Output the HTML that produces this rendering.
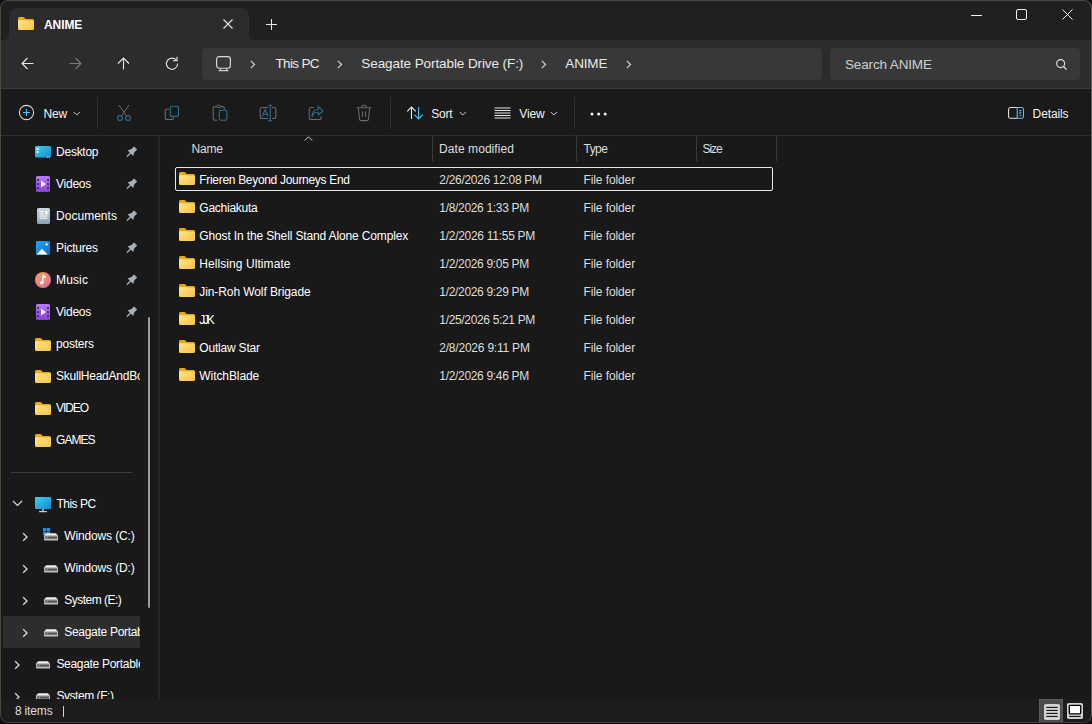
<!DOCTYPE html>
<html><head><meta charset="utf-8">
<style>
*{margin:0;padding:0;box-sizing:border-box}
html,body{width:1092px;height:724px;overflow:hidden;background:#0e0e0e;font-family:"Liberation Sans",sans-serif;color:#fff}
.win{position:absolute;left:0;top:0;width:1092px;height:723px;border-radius:8px;background:#191919;overflow:hidden}
.bord{position:absolute;left:0;top:0;width:1092px;height:723px;border-radius:8px;border:1px solid #3c3c3c;border-top-color:#474747;border-left-color:#4a4838;border-right-color:#5e5e5e}
.abs{position:absolute}
.t{position:absolute;white-space:nowrap}
svg{position:absolute;overflow:visible}
</style></head><body>
<svg width="0" height="0" style="position:absolute">
<defs>
<linearGradient id="fg" x1="0" y1="0" x2="1" y2="1"><stop offset="0" stop-color="#ffe58c"/><stop offset="1" stop-color="#f9c33f"/></linearGradient>
<linearGradient id="cy" x1="0" y1="0" x2="1" y2="1"><stop offset="0" stop-color="#3fd0ea"/><stop offset="1" stop-color="#1787d2"/></linearGradient>
<linearGradient id="pu" x1="0" y1="0" x2="0" y2="1"><stop offset="0" stop-color="#b77cf2"/><stop offset="1" stop-color="#8840d8"/></linearGradient>
<linearGradient id="dc" x1="0" y1="0" x2="0" y2="1"><stop offset="0" stop-color="#cfdbe6"/><stop offset="1" stop-color="#8aa0b6"/></linearGradient>
<linearGradient id="pc" x1="0" y1="0" x2="1" y2="1"><stop offset="0" stop-color="#29a6f5"/><stop offset="1" stop-color="#0c6bc4"/></linearGradient>
<linearGradient id="mu" x1="0" y1="0" x2="1" y2="1"><stop offset="0" stop-color="#f6a257"/><stop offset="1" stop-color="#d4699f"/></linearGradient>
</defs>
</svg>
<div class="win">
<div class="abs" style="left:0;top:0;width:1092px;height:40px;background:#202020"></div>
<div class="abs" style="left:9px;top:8px;width:240px;height:32px;background:#2c2c2c;border-radius:8px 8px 0 0"></div>
<svg style="left:4px;top:35px" width="5" height="5"><path d="M0 5H5V0A5 5 0 0 1 0 5Z" fill="#2c2c2c"/></svg>
<svg style="left:249px;top:35px" width="5" height="5"><path d="M5 5H0V0A5 5 0 0 0 5 5Z" fill="#2c2c2c"/></svg>
<svg style="left:18px;top:17px" width="16" height="13"><svg viewBox="0 0 16 13" width="100%" height="100%" style="position:absolute;left:0;top:0">
<path d="M1.5 0H5.6L7.6 2H14.5A1.5 1.5 0 0 1 16 3.5V6H0V1.5A1.5 1.5 0 0 1 1.5 0Z" fill="#efa80a"/>
<path d="M0 4.5A1.5 1.5 0 0 1 1.5 3H6.6L8 3.6H14.5A1.5 1.5 0 0 1 16 5.1V11.5A1.5 1.5 0 0 1 14.5 13H1.5A1.5 1.5 0 0 1 0 11.5Z" fill="url(#fg)"/>
</svg></svg>
<div class="t" style="left:44.00px;top:17.00px;font-size:12px;line-height:16px;color:#ffffff;letter-spacing:-0.088px;font-weight:bold">ANIME</div>
<svg style="left:222.5px;top:19px" width="10" height="10"><path d="M0.5 0.5L9.5 9.5M9.5 0.5L0.5 9.5" stroke="#e6e6e6" stroke-width="1.1"/></svg>
<svg style="left:266px;top:19px" width="11" height="11"><path d="M5.5 0V11M0 5.5H11" stroke="#e6e6e6" stroke-width="1"/></svg>
<svg style="left:971px;top:14px" width="11" height="2"><path d="M0 1.5H11" stroke="#f0f0f0" stroke-width="1"/></svg>
<svg style="left:1016px;top:9px" width="11" height="11"><rect x="0.5" y="0.5" width="10" height="10" rx="1.5" fill="none" stroke="#f0f0f0" stroke-width="1"/></svg>
<svg style="left:1062px;top:9px" width="11" height="11"><path d="M0.5 0.5L10.5 10.5M10.5 0.5L0.5 10.5" stroke="#f0f0f0" stroke-width="1"/></svg>
<div class="abs" style="left:0;top:40px;width:1092px;height:48px;background:#2c2c2c"></div>
<div class="abs" style="left:0;top:88px;width:1092px;height:1px;background:#393939"></div>
<svg style="left:21px;top:57px" width="13" height="13"><path d="M12.5 6.5H1M6.5 1L1 6.5L6.5 12" fill="none" stroke="#e8e8e8" stroke-width="1.1"/></svg>
<svg style="left:69px;top:57px" width="13" height="13"><path d="M0.5 6.5H12M6.5 1L12 6.5L6.5 12" fill="none" stroke="#7a7a7a" stroke-width="1.1"/></svg>
<svg style="left:117px;top:57px" width="13" height="13"><path d="M6.5 12.5V1M1 6.5L6.5 1L12 6.5" fill="none" stroke="#e8e8e8" stroke-width="1.1"/></svg>
<svg style="left:165px;top:56.2px" width="14" height="14"><path d="M11.6 4.5A5.6 5.6 0 1 0 12.6 7.5" fill="none" stroke="#e8e8e8" stroke-width="1.1"/><path d="M12 0.8V4.8H8" fill="none" stroke="#e8e8e8" stroke-width="1.1"/></svg>
<div class="abs" style="left:202px;top:48px;width:620px;height:32px;background:#383838;border-radius:4px"></div>
<svg style="left:215.5px;top:56px" width="15" height="16"><rect x="0.6" y="0.6" width="13.8" height="11.6" rx="2.6" fill="none" stroke="#d8d8d8" stroke-width="1.15"/><path d="M4.3 12.6V14.2M10.7 12.6V14.2" stroke="#cfcfcf" stroke-width="1.1"/><path d="M2.6 14.6H12.4" stroke="#cfcfcf" stroke-width="1.2"/></svg>
<svg style="left:250px;top:60px" width="6" height="9"><path d="M0.8 0.8L4.6 4.5L0.8 8.2" fill="none" stroke="#d8d8d8" stroke-width="1.1"/></svg>
<svg style="left:337px;top:60px" width="6" height="9"><path d="M0.8 0.8L4.6 4.5L0.8 8.2" fill="none" stroke="#d8d8d8" stroke-width="1.1"/></svg>
<svg style="left:541px;top:60px" width="6" height="9"><path d="M0.8 0.8L4.6 4.5L0.8 8.2" fill="none" stroke="#d8d8d8" stroke-width="1.1"/></svg>
<svg style="left:626px;top:60px" width="6" height="9"><path d="M0.8 0.8L4.6 4.5L0.8 8.2" fill="none" stroke="#d8d8d8" stroke-width="1.1"/></svg>
<div class="abs" style="left:830px;top:48px;width:250px;height:32px;background:#383838;border-radius:4px"></div>
<svg style="left:1055.5px;top:59px" width="12" height="11"><circle cx="4.6" cy="4.6" r="4" fill="none" stroke="#e0e0e0" stroke-width="1.15"/><path d="M7.5 7.5L10.6 10.6" stroke="#e0e0e0" stroke-width="1.3"/></svg>
<div class="t" style="left:275.50px;top:55.20px;font-size:13.5px;line-height:18px;color:#e8e8e8;letter-spacing:-0.667px">This PC</div>
<div class="t" style="left:361.30px;top:55.20px;font-size:13.5px;line-height:18px;color:#e8e8e8;letter-spacing:-0.088px">Seagate Portable Drive (F:)</div>
<div class="t" style="left:565.30px;top:55.20px;font-size:13.5px;line-height:18px;color:#e8e8e8;letter-spacing:-0.162px">ANIME</div>
<div class="t" style="left:845.00px;top:55.50px;font-size:13.5px;line-height:18px;color:#cfcfcf;letter-spacing:-0.141px">Search ANIME</div>
<div class="abs" style="left:0;top:89px;width:1092px;height:46px;background:#1a1a1a"></div>
<div class="abs" style="left:0;top:135px;width:1092px;height:1px;background:#2e2e2e"></div>
<svg style="left:18px;top:104px" width="17" height="17"><circle cx="8.5" cy="8.5" r="7.1" fill="none" stroke="#d6d6d6" stroke-width="1.1"/><path d="M8.5 5V12M5 8.5H12" stroke="#4cc2ff" stroke-width="1.1"/></svg>
<svg style="left:73px;top:111px" width="8" height="6"><path d="M0.8 1L3.8 4L6.8 1" fill="none" stroke="#cfcfcf" stroke-width="1"/></svg>
<div class="abs" style="left:97px;top:97px;width:1px;height:32px;background:#2e2e2e"></div>
<svg style="left:115px;top:104px" width="18" height="18"><path d="M4 1L11 11.5M13.8 1L6.8 11.5" stroke="#6a6a6a" stroke-width="1"/><circle cx="5" cy="14" r="2.4" fill="none" stroke="#2f6d92" stroke-width="1.1"/><circle cx="13" cy="14" r="2.4" fill="none" stroke="#2f6d92" stroke-width="1.1"/></svg>
<svg style="left:164px;top:105px" width="16" height="16"><path d="M5 4H3.2A2 2 0 0 0 1.2 6V12.5A2 2 0 0 0 3.2 14.5H7.5A2 2 0 0 0 9.5 12.5" fill="none" stroke="#6a6a6a" stroke-width="1.1"/><rect x="6.3" y="1.2" width="8.2" height="10.2" rx="2" fill="none" stroke="#2f6d92" stroke-width="1.1"/></svg>
<svg style="left:212px;top:104px" width="17" height="18"><path d="M5.2 16.2H2.8A1.6 1.6 0 0 1 1.2 14.6V4.2A1.6 1.6 0 0 1 2.8 2.6H10.8A1.6 1.6 0 0 1 12.4 4.2V5.4" fill="none" stroke="#6a6a6a" stroke-width="1.1"/><rect x="4.8" y="1.2" width="4" height="2.4" rx="1.2" fill="#1a1a1a" stroke="#6a6a6a" stroke-width="1"/><rect x="7.3" y="6.3" width="7.6" height="9.9" rx="1.6" fill="none" stroke="#2f6d92" stroke-width="1.1"/></svg>
<svg style="left:259px;top:104px" width="18" height="18"><path d="M9 3.5H3.2A2 2 0 0 0 1.2 5.5V12.5A2 2 0 0 0 3.2 14.5H9M13 3.5H14.8A2 2 0 0 1 16.8 5.5V12.5A2 2 0 0 1 14.8 14.5H13" fill="none" stroke="#6a6a6a" stroke-width="1.1"/><path d="M3.4 12.2L6.2 5.4L9 12.2M4.4 10.2H8" fill="none" stroke="#2f6d92" stroke-width="1.1"/><path d="M11.2 1.2V16.8M9.2 1.2H13.2M9.2 16.8H13.2" fill="none" stroke="#2f6d92" stroke-width="1.1"/></svg>
<svg style="left:308px;top:104px" width="17" height="18"><path d="M6 3.5H3.2A2 2 0 0 0 1.2 5.5V13.5A2 2 0 0 0 3.2 15.5H11.2A2 2 0 0 0 13.2 13.5V12.5" fill="none" stroke="#6a6a6a" stroke-width="1.1"/><path d="M4 13C4.5 9.5 7.5 8 10.2 8.2V11L15 6.8L10.2 2.4V5.2C6.6 5.4 4 8.4 4 13Z" fill="none" stroke="#2f6d92" stroke-width="1.1" stroke-linejoin="round"/></svg>
<svg style="left:356px;top:104px" width="16" height="18"><path d="M0.8 3.8H15.2M5.8 3.8V2.6A1.4 1.4 0 0 1 7.2 1.2H8.8A1.4 1.4 0 0 1 10.2 2.6V3.8M2.2 3.8L3.6 15.2A1.6 1.6 0 0 0 5.2 16.6H10.8A1.6 1.6 0 0 0 12.4 15.2L13.8 3.8M6.5 7.2V12.8M9.5 7.2V12.8" fill="none" stroke="#6a6a6a" stroke-width="1.1"/></svg>
<div class="abs" style="left:390px;top:97px;width:1px;height:32px;background:#2e2e2e"></div>
<svg style="left:406px;top:106px" width="18" height="14"><path d="M5.5 13V1M1.2 5.4L5.5 1L9.8 5.4" fill="none" stroke="#e8e8e8" stroke-width="1.1"/><path d="M12.6 1V13M8.3 8.6L12.6 13L16.9 8.6" fill="none" stroke="#4cc2ff" stroke-width="1.1"/></svg>
<svg style="left:459px;top:111px" width="8" height="6"><path d="M0.8 1L3.8 4L6.8 1" fill="none" stroke="#cfcfcf" stroke-width="1"/></svg>
<svg style="left:494px;top:107px" width="17" height="12"><path d="M0.5 1H16.5M0.5 3.5H16.5M0.5 6H16.5M0.5 8.5H16.5M0.5 11H16.5" stroke="#e8e8e8" stroke-width="1"/></svg>
<svg style="left:550px;top:111px" width="8" height="6"><path d="M0.8 1L3.8 4L6.8 1" fill="none" stroke="#cfcfcf" stroke-width="1"/></svg>
<div class="abs" style="left:574px;top:97px;width:1px;height:32px;background:#2e2e2e"></div>
<svg style="left:590px;top:112px" width="18" height="4"><circle cx="2" cy="2" r="1.5" fill="#f0f0f0"/><circle cx="8.6" cy="2" r="1.5" fill="#f0f0f0"/><circle cx="15.2" cy="2" r="1.5" fill="#f0f0f0"/></svg>
<svg style="left:1008px;top:107px" width="17" height="12"><path d="M9.2 0.55H2.4A1.9 1.9 0 0 0 0.55 2.4V9.4A1.9 1.9 0 0 0 2.4 11.25H9.2" fill="none" stroke="#e0e0e0" stroke-width="1.1"/><path d="M9.2 0.55H13.6A1.9 1.9 0 0 1 15.5 2.4V9.4A1.9 1.9 0 0 1 13.6 11.25H9.2Z" fill="none" stroke="#4cc2ff" stroke-width="1.1"/><path d="M11.2 3.6H13.4M11.2 5.9H13.4M11.2 8.2H13.4" stroke="#4cc2ff" stroke-width="1.1"/></svg>
<div class="t" style="left:43.40px;top:106.20px;font-size:12px;line-height:16px;color:#f2f2f2;letter-spacing:-0.125px">New</div>
<div class="t" style="left:431.20px;top:106.20px;font-size:12px;line-height:16px;color:#f2f2f2;letter-spacing:-0.200px">Sort</div>
<div class="t" style="left:519.30px;top:106.20px;font-size:12px;line-height:16px;color:#f2f2f2;letter-spacing:-0.117px">View</div>
<div class="t" style="left:1032.60px;top:106.00px;font-size:12px;line-height:16px;color:#f2f2f2;letter-spacing:-0.117px">Details</div>
<div class="abs" style="left:158px;top:136px;width:2px;height:563px;background:#252525"></div>
<div class="abs" style="left:0;top:699px;width:1092px;height:24px;background:#1c1c1c"></div>
<div class="abs" style="left:3px;top:616px;width:137px;height:32px;background:#2d2d2d;border-radius:1px"></div>
<div class="abs" style="left:0;top:0;width:140px;height:699px;overflow:hidden">
<svg style="left:35px;top:146px" width="16" height="12"><rect x="0" y="0" width="16" height="11.6" rx="1.5" fill="url(#cy)"/><rect x="1.6" y="2" width="2" height="1.8" fill="#fff"/><rect x="1.6" y="5" width="2" height="1.8" fill="#fff"/><rect x="11.8" y="10.6" width="1" height="1" fill="#fff"/><rect x="13.6" y="10.6" width="1" height="1" fill="#fff"/></svg>
<svg style="left:36px;top:176px" width="14" height="16"><svg viewBox="0 0 14 16" width="100%" height="100%" style="position:absolute;left:0;top:0">
<rect x="0" y="0" width="14" height="16" rx="1.5" fill="url(#pu)"/>
<g fill="#4b2a7a"><rect x="1" y="3" width="2" height="2" rx="0.5"/><rect x="1" y="7" width="2" height="2" rx="0.5"/><rect x="1" y="11" width="2" height="2" rx="0.5"/><rect x="11" y="3" width="2" height="2" rx="0.5"/><rect x="11" y="7" width="2" height="2" rx="0.5"/><rect x="11" y="11" width="2" height="2" rx="0.5"/></g>
<path d="M5 4.6L10 8L5 11.4Z" fill="#f2f2f2"/>
</svg></svg>
<svg style="left:36.5px;top:208px" width="13" height="16"><path d="M1.5 0H11.5A1.5 1.5 0 0 1 13 1.5V14.5A1.5 1.5 0 0 1 11.5 16H1.5A1.5 1.5 0 0 1 0 14.5V1.5A1.5 1.5 0 0 1 1.5 0Z" fill="url(#dc)"/><path d="M2.6 3.6H7M2.6 5.8H7M2.6 8H10.4M2.6 10.2H10.4" stroke="#fff" stroke-width="1"/><rect x="8" y="3" width="2.6" height="3.4" fill="#fff"/></svg>
<svg style="left:36px;top:241px" width="14" height="14"><rect x="0" y="0" width="14" height="14" rx="1.5" fill="url(#pc)"/><path d="M0.6 13.4L6 7.8L11.6 13.4Z" fill="#fff"/><circle cx="10.6" cy="3.4" r="1.1" fill="#fff"/></svg>
<svg style="left:35px;top:272px" width="16" height="16"><circle cx="8" cy="8" r="8" fill="url(#mu)"/><path d="M8 3.2V10.6" stroke="#fff" stroke-width="1.4"/><path d="M8 3.2C9.2 3.6 10.6 4.3 10.4 6.2" fill="none" stroke="#fff" stroke-width="1.4"/><ellipse cx="6.6" cy="10.8" rx="1.9" ry="1.6" fill="#fff"/></svg>
<svg style="left:36px;top:304px" width="14" height="16"><svg viewBox="0 0 14 16" width="100%" height="100%" style="position:absolute;left:0;top:0">
<rect x="0" y="0" width="14" height="16" rx="1.5" fill="url(#pu)"/>
<g fill="#4b2a7a"><rect x="1" y="3" width="2" height="2" rx="0.5"/><rect x="1" y="7" width="2" height="2" rx="0.5"/><rect x="1" y="11" width="2" height="2" rx="0.5"/><rect x="11" y="3" width="2" height="2" rx="0.5"/><rect x="11" y="7" width="2" height="2" rx="0.5"/><rect x="11" y="11" width="2" height="2" rx="0.5"/></g>
<path d="M5 4.6L10 8L5 11.4Z" fill="#f2f2f2"/>
</svg></svg>
<svg style="left:35px;top:338px" width="16" height="13"><svg viewBox="0 0 16 13" width="100%" height="100%" style="position:absolute;left:0;top:0">
<path d="M1.5 0H5.6L7.6 2H14.5A1.5 1.5 0 0 1 16 3.5V6H0V1.5A1.5 1.5 0 0 1 1.5 0Z" fill="#efa80a"/>
<path d="M0 4.5A1.5 1.5 0 0 1 1.5 3H6.6L8 3.6H14.5A1.5 1.5 0 0 1 16 5.1V11.5A1.5 1.5 0 0 1 14.5 13H1.5A1.5 1.5 0 0 1 0 11.5Z" fill="url(#fg)"/>
</svg></svg>
<svg style="left:35px;top:370px" width="16" height="13"><svg viewBox="0 0 16 13" width="100%" height="100%" style="position:absolute;left:0;top:0">
<path d="M1.5 0H5.6L7.6 2H14.5A1.5 1.5 0 0 1 16 3.5V6H0V1.5A1.5 1.5 0 0 1 1.5 0Z" fill="#efa80a"/>
<path d="M0 4.5A1.5 1.5 0 0 1 1.5 3H6.6L8 3.6H14.5A1.5 1.5 0 0 1 16 5.1V11.5A1.5 1.5 0 0 1 14.5 13H1.5A1.5 1.5 0 0 1 0 11.5Z" fill="url(#fg)"/>
</svg></svg>
<svg style="left:35px;top:402px" width="16" height="13"><svg viewBox="0 0 16 13" width="100%" height="100%" style="position:absolute;left:0;top:0">
<path d="M1.5 0H5.6L7.6 2H14.5A1.5 1.5 0 0 1 16 3.5V6H0V1.5A1.5 1.5 0 0 1 1.5 0Z" fill="#efa80a"/>
<path d="M0 4.5A1.5 1.5 0 0 1 1.5 3H6.6L8 3.6H14.5A1.5 1.5 0 0 1 16 5.1V11.5A1.5 1.5 0 0 1 14.5 13H1.5A1.5 1.5 0 0 1 0 11.5Z" fill="url(#fg)"/>
</svg></svg>
<svg style="left:35px;top:434px" width="16" height="13"><svg viewBox="0 0 16 13" width="100%" height="100%" style="position:absolute;left:0;top:0">
<path d="M1.5 0H5.6L7.6 2H14.5A1.5 1.5 0 0 1 16 3.5V6H0V1.5A1.5 1.5 0 0 1 1.5 0Z" fill="#efa80a"/>
<path d="M0 4.5A1.5 1.5 0 0 1 1.5 3H6.6L8 3.6H14.5A1.5 1.5 0 0 1 16 5.1V11.5A1.5 1.5 0 0 1 14.5 13H1.5A1.5 1.5 0 0 1 0 11.5Z" fill="url(#fg)"/>
</svg></svg>
<div class="abs" style="left:11px;top:472px;width:121px;height:1px;background:#3a3a3a"></div>
<svg style="left:12px;top:500px" width="11" height="7"><path d="M1 1L5.5 5.5L10 1" fill="none" stroke="#e0e0e0" stroke-width="1.1"/></svg>
<svg style="left:35px;top:497px" width="16" height="16"><rect x="0" y="0" width="16" height="12" rx="0.8" fill="url(#cy)"/><rect x="7.2" y="12" width="1.6" height="2" fill="#c8c8c8"/><rect x="4" y="14" width="8" height="1.3" rx="0.6" fill="#c8c8c8"/></svg>
<svg style="left:43px;top:528px" width="8" height="8"><rect x="0" y="0" width="3.3" height="3.3" fill="#1e90f0"/><rect x="3.8" y="0" width="3.3" height="3.3" fill="#1e90f0"/><rect x="0" y="3.8" width="3.3" height="3.3" fill="#1e90f0"/><rect x="3.8" y="3.8" width="3.3" height="3.3" fill="#1e90f0"/></svg>
<svg style="left:44px;top:532.6px" width="14" height="7.5"><svg viewBox="0 0 14 7.5" width="100%" height="100%" style="position:absolute;left:0;top:0">
<path d="M2.1 0.2H11.9L14 2.8H0Z" fill="#ededed"/>
<rect x="0" y="2.6" width="14" height="4.9" rx="0.7" fill="#c2c2c2"/>
<rect x="1" y="3.4" width="12" height="2.3" fill="#555"/>
<circle cx="3.4" cy="4.5" r="0.75" fill="#35e14a"/>
</svg></svg>
<svg style="left:44px;top:564.6px" width="14" height="7.5"><svg viewBox="0 0 14 7.5" width="100%" height="100%" style="position:absolute;left:0;top:0">
<path d="M2.1 0.2H11.9L14 2.8H0Z" fill="#ededed"/>
<rect x="0" y="2.6" width="14" height="4.9" rx="0.7" fill="#c2c2c2"/>
<rect x="1" y="3.4" width="12" height="2.3" fill="#555"/>
<circle cx="3.4" cy="4.5" r="0.75" fill="#35e14a"/>
</svg></svg>
<svg style="left:44px;top:596.6px" width="14" height="7.5"><svg viewBox="0 0 14 7.5" width="100%" height="100%" style="position:absolute;left:0;top:0">
<path d="M2.1 0.2H11.9L14 2.8H0Z" fill="#ededed"/>
<rect x="0" y="2.6" width="14" height="4.9" rx="0.7" fill="#c2c2c2"/>
<rect x="1" y="3.4" width="12" height="2.3" fill="#555"/>
<circle cx="3.4" cy="4.5" r="0.75" fill="#35e14a"/>
</svg></svg>
<svg style="left:44px;top:628.6px" width="14" height="7.5"><svg viewBox="0 0 14 7.5" width="100%" height="100%" style="position:absolute;left:0;top:0">
<path d="M2.1 0.2H11.9L14 2.8H0Z" fill="#ededed"/>
<rect x="0" y="2.6" width="14" height="4.9" rx="0.7" fill="#c2c2c2"/>
<rect x="1" y="3.4" width="12" height="2.3" fill="#555"/>
<circle cx="3.4" cy="4.5" r="0.75" fill="#35e14a"/>
</svg></svg>
<svg style="left:36px;top:660.6px" width="14" height="7.5"><svg viewBox="0 0 14 7.5" width="100%" height="100%" style="position:absolute;left:0;top:0">
<path d="M2.1 0.2H11.9L14 2.8H0Z" fill="#ededed"/>
<rect x="0" y="2.6" width="14" height="4.9" rx="0.7" fill="#c2c2c2"/>
<rect x="1" y="3.4" width="12" height="2.3" fill="#555"/>
<circle cx="3.4" cy="4.5" r="0.75" fill="#35e14a"/>
</svg></svg>
<svg style="left:36px;top:692.6px" width="14" height="7.5"><svg viewBox="0 0 14 7.5" width="100%" height="100%" style="position:absolute;left:0;top:0">
<path d="M2.1 0.2H11.9L14 2.8H0Z" fill="#ededed"/>
<rect x="0" y="2.6" width="14" height="4.9" rx="0.7" fill="#c2c2c2"/>
<rect x="1" y="3.4" width="12" height="2.3" fill="#555"/>
<circle cx="3.4" cy="4.5" r="0.75" fill="#35e14a"/>
</svg></svg>
<svg style="left:22px;top:532px" width="7" height="10"><path d="M1.2 1.2L5 5L1.2 8.8" fill="none" stroke="#dcdcdc" stroke-width="1.3"/></svg>
<svg style="left:22px;top:564px" width="7" height="10"><path d="M1.2 1.2L5 5L1.2 8.8" fill="none" stroke="#dcdcdc" stroke-width="1.3"/></svg>
<svg style="left:22px;top:596px" width="7" height="10"><path d="M1.2 1.2L5 5L1.2 8.8" fill="none" stroke="#dcdcdc" stroke-width="1.3"/></svg>
<svg style="left:22px;top:628px" width="7" height="10"><path d="M1.2 1.2L5 5L1.2 8.8" fill="none" stroke="#dcdcdc" stroke-width="1.3"/></svg>
<svg style="left:14px;top:660px" width="7" height="10"><path d="M1.2 1.2L5 5L1.2 8.8" fill="none" stroke="#dcdcdc" stroke-width="1.3"/></svg>
<svg style="left:14px;top:692px" width="7" height="10"><path d="M1.2 1.2L5 5L1.2 8.8" fill="none" stroke="#dcdcdc" stroke-width="1.3"/></svg>
<div class="t" style="left:56.10px;top:143.50px;font-size:12px;line-height:16px;color:#ffffff;letter-spacing:-0.267px">Desktop</div>
<div class="t" style="left:56.10px;top:175.50px;font-size:12px;line-height:16px;color:#ffffff;letter-spacing:-0.280px">Videos</div>
<div class="t" style="left:56.10px;top:207.50px;font-size:12px;line-height:16px;color:#ffffff;letter-spacing:0.012px">Documents</div>
<div class="t" style="left:56.10px;top:239.50px;font-size:12px;line-height:16px;color:#ffffff;letter-spacing:-0.193px">Pictures</div>
<div class="t" style="left:56.10px;top:271.50px;font-size:12px;line-height:16px;color:#ffffff;letter-spacing:0.112px">Music</div>
<div class="t" style="left:56.10px;top:303.50px;font-size:12px;line-height:16px;color:#ffffff;letter-spacing:-0.280px">Videos</div>
<div class="t" style="left:56.10px;top:335.50px;font-size:12px;line-height:16px;color:#ffffff;letter-spacing:-0.242px">posters</div>
<div class="t" style="left:56.10px;top:367.50px;font-size:12px;line-height:16px;color:#ffffff;letter-spacing:-0.25px">SkullHeadAndBones</div>
<div class="t" style="left:56.10px;top:399.50px;font-size:12px;line-height:16px;color:#ffffff;letter-spacing:-1.113px">VIDEO</div>
<div class="t" style="left:56.10px;top:431.50px;font-size:12px;line-height:16px;color:#ffffff;letter-spacing:-1.013px">GAMES</div>
<div class="t" style="left:56.40px;top:495.50px;font-size:12px;line-height:16px;color:#ffffff;letter-spacing:-0.483px">This PC</div>
<div class="t" style="left:64.30px;top:527.50px;font-size:12px;line-height:16px;color:#ffffff;letter-spacing:-0.145px">Windows (C:)</div>
<div class="t" style="left:64.30px;top:559.50px;font-size:12px;line-height:16px;color:#ffffff;letter-spacing:-0.145px">Windows (D:)</div>
<div class="t" style="left:64.30px;top:591.50px;font-size:12px;line-height:16px;color:#ffffff;letter-spacing:-0.515px">System (E:)</div>
<div class="t" style="left:64.30px;top:623.50px;font-size:12px;line-height:16px;color:#ffffff;letter-spacing:-0.3px">Seagate Portable Drive (F:)</div>
<div class="t" style="left:56.40px;top:655.50px;font-size:12px;line-height:16px;color:#ffffff;letter-spacing:-0.3px">Seagate Portable Drive (F:)</div>
<div class="t" style="left:56.40px;top:687.50px;font-size:12px;line-height:16px;color:#ffffff;letter-spacing:-0.450px">System (F:)</div>
</div>
<svg style="left:125.6px;top:146.6px" width="10.5" height="10.5"><svg viewBox="-5.5 -5.5 11 11" width="100%" height="100%" style="position:absolute;left:0;top:0">
<g transform="rotate(45)"><path d="M-2.3 -6.4H2.3V-2.2L4.2 1.3H-4.2L-2.3 -2.2Z" fill="#a6b2bb"/><rect x="-0.7" y="1" width="1.4" height="5.4" fill="#a6b2bb"/></g>
</svg></svg>
<svg style="left:125.6px;top:178.6px" width="10.5" height="10.5"><svg viewBox="-5.5 -5.5 11 11" width="100%" height="100%" style="position:absolute;left:0;top:0">
<g transform="rotate(45)"><path d="M-2.3 -6.4H2.3V-2.2L4.2 1.3H-4.2L-2.3 -2.2Z" fill="#a6b2bb"/><rect x="-0.7" y="1" width="1.4" height="5.4" fill="#a6b2bb"/></g>
</svg></svg>
<svg style="left:125.6px;top:210.6px" width="10.5" height="10.5"><svg viewBox="-5.5 -5.5 11 11" width="100%" height="100%" style="position:absolute;left:0;top:0">
<g transform="rotate(45)"><path d="M-2.3 -6.4H2.3V-2.2L4.2 1.3H-4.2L-2.3 -2.2Z" fill="#a6b2bb"/><rect x="-0.7" y="1" width="1.4" height="5.4" fill="#a6b2bb"/></g>
</svg></svg>
<svg style="left:125.6px;top:242.6px" width="10.5" height="10.5"><svg viewBox="-5.5 -5.5 11 11" width="100%" height="100%" style="position:absolute;left:0;top:0">
<g transform="rotate(45)"><path d="M-2.3 -6.4H2.3V-2.2L4.2 1.3H-4.2L-2.3 -2.2Z" fill="#a6b2bb"/><rect x="-0.7" y="1" width="1.4" height="5.4" fill="#a6b2bb"/></g>
</svg></svg>
<svg style="left:125.6px;top:274.6px" width="10.5" height="10.5"><svg viewBox="-5.5 -5.5 11 11" width="100%" height="100%" style="position:absolute;left:0;top:0">
<g transform="rotate(45)"><path d="M-2.3 -6.4H2.3V-2.2L4.2 1.3H-4.2L-2.3 -2.2Z" fill="#a6b2bb"/><rect x="-0.7" y="1" width="1.4" height="5.4" fill="#a6b2bb"/></g>
</svg></svg>
<svg style="left:125.6px;top:306.6px" width="10.5" height="10.5"><svg viewBox="-5.5 -5.5 11 11" width="100%" height="100%" style="position:absolute;left:0;top:0">
<g transform="rotate(45)"><path d="M-2.3 -6.4H2.3V-2.2L4.2 1.3H-4.2L-2.3 -2.2Z" fill="#a6b2bb"/><rect x="-0.7" y="1" width="1.4" height="5.4" fill="#a6b2bb"/></g>
</svg></svg>
<div class="abs" style="left:148px;top:317px;width:2px;height:291px;background:#9a9a9a;border-radius:1px"></div>
<div class="t" style="left:191.50px;top:141.00px;font-size:12px;line-height:16px;color:#dedede;letter-spacing:-0.167px">Name</div>
<div class="t" style="left:439.10px;top:141.00px;font-size:12px;line-height:16px;color:#dedede;letter-spacing:0.062px">Date modified</div>
<div class="t" style="left:583.50px;top:141.00px;font-size:12px;line-height:16px;color:#dedede;letter-spacing:-0.533px">Type</div>
<div class="t" style="left:702.50px;top:141.00px;font-size:12px;line-height:16px;color:#dedede;letter-spacing:-1.050px">Size</div>
<div class="abs" style="left:432px;top:136px;width:1px;height:25px;background:#3a3a3a"></div>
<div class="abs" style="left:576px;top:136px;width:1px;height:25px;background:#3a3a3a"></div>
<div class="abs" style="left:696px;top:136px;width:1px;height:25px;background:#3a3a3a"></div>
<div class="abs" style="left:776px;top:136px;width:1px;height:25px;background:#3a3a3a"></div>
<svg style="left:304px;top:136px" width="9" height="5"><path d="M0.8 4.5L4.5 0.8L8.2 4.5" fill="none" stroke="#cfcfcf" stroke-width="1"/></svg>
<div class="abs" style="left:175px;top:167px;width:598px;height:24px;border:1px solid #e8e8e8;border-radius:2px"></div>
<svg style="left:179px;top:172px" width="16" height="13"><svg viewBox="0 0 16 13" width="100%" height="100%" style="position:absolute;left:0;top:0">
<path d="M1.5 0H5.6L7.6 2H14.5A1.5 1.5 0 0 1 16 3.5V6H0V1.5A1.5 1.5 0 0 1 1.5 0Z" fill="#efa80a"/>
<path d="M0 4.5A1.5 1.5 0 0 1 1.5 3H6.6L8 3.6H14.5A1.5 1.5 0 0 1 16 5.1V11.5A1.5 1.5 0 0 1 14.5 13H1.5A1.5 1.5 0 0 1 0 11.5Z" fill="url(#fg)"/>
</svg></svg>
<div class="t" style="left:199.30px;top:172.00px;font-size:12px;line-height:16px;color:#ffffff;letter-spacing:-0.313px">Frieren Beyond Journeys End</div>
<div class="t" style="left:439.30px;top:172.00px;font-size:12px;line-height:16px;color:#dedede;letter-spacing:-0.318px">2/26/2026 12:08 PM</div>
<div class="t" style="left:583.50px;top:172.00px;font-size:12px;line-height:16px;color:#dedede;letter-spacing:-0.100px">File folder</div>
<svg style="left:179px;top:200px" width="16" height="13"><svg viewBox="0 0 16 13" width="100%" height="100%" style="position:absolute;left:0;top:0">
<path d="M1.5 0H5.6L7.6 2H14.5A1.5 1.5 0 0 1 16 3.5V6H0V1.5A1.5 1.5 0 0 1 1.5 0Z" fill="#efa80a"/>
<path d="M0 4.5A1.5 1.5 0 0 1 1.5 3H6.6L8 3.6H14.5A1.5 1.5 0 0 1 16 5.1V11.5A1.5 1.5 0 0 1 14.5 13H1.5A1.5 1.5 0 0 1 0 11.5Z" fill="url(#fg)"/>
</svg></svg>
<div class="t" style="left:199.30px;top:200.00px;font-size:12px;line-height:16px;color:#ffffff;letter-spacing:-0.250px">Gachiakuta</div>
<div class="t" style="left:439.30px;top:200.00px;font-size:12px;line-height:16px;color:#dedede;letter-spacing:-0.317px">1/8/2026 1:33 PM</div>
<div class="t" style="left:583.50px;top:200.00px;font-size:12px;line-height:16px;color:#dedede;letter-spacing:-0.100px">File folder</div>
<svg style="left:179px;top:228px" width="16" height="13"><svg viewBox="0 0 16 13" width="100%" height="100%" style="position:absolute;left:0;top:0">
<path d="M1.5 0H5.6L7.6 2H14.5A1.5 1.5 0 0 1 16 3.5V6H0V1.5A1.5 1.5 0 0 1 1.5 0Z" fill="#efa80a"/>
<path d="M0 4.5A1.5 1.5 0 0 1 1.5 3H6.6L8 3.6H14.5A1.5 1.5 0 0 1 16 5.1V11.5A1.5 1.5 0 0 1 14.5 13H1.5A1.5 1.5 0 0 1 0 11.5Z" fill="url(#fg)"/>
</svg></svg>
<div class="t" style="left:199.30px;top:228.00px;font-size:12px;line-height:16px;color:#ffffff;letter-spacing:-0.139px">Ghost In the Shell Stand Alone Complex</div>
<div class="t" style="left:439.30px;top:228.00px;font-size:12px;line-height:16px;color:#dedede;letter-spacing:-0.281px">1/2/2026 11:55 PM</div>
<div class="t" style="left:583.50px;top:228.00px;font-size:12px;line-height:16px;color:#dedede;letter-spacing:-0.100px">File folder</div>
<svg style="left:179px;top:256px" width="16" height="13"><svg viewBox="0 0 16 13" width="100%" height="100%" style="position:absolute;left:0;top:0">
<path d="M1.5 0H5.6L7.6 2H14.5A1.5 1.5 0 0 1 16 3.5V6H0V1.5A1.5 1.5 0 0 1 1.5 0Z" fill="#efa80a"/>
<path d="M0 4.5A1.5 1.5 0 0 1 1.5 3H6.6L8 3.6H14.5A1.5 1.5 0 0 1 16 5.1V11.5A1.5 1.5 0 0 1 14.5 13H1.5A1.5 1.5 0 0 1 0 11.5Z" fill="url(#fg)"/>
</svg></svg>
<div class="t" style="left:199.30px;top:256.00px;font-size:12px;line-height:16px;color:#ffffff;letter-spacing:0.072px">Hellsing Ultimate</div>
<div class="t" style="left:439.30px;top:256.00px;font-size:12px;line-height:16px;color:#dedede;letter-spacing:-0.317px">1/2/2026 9:05 PM</div>
<div class="t" style="left:583.50px;top:256.00px;font-size:12px;line-height:16px;color:#dedede;letter-spacing:-0.100px">File folder</div>
<svg style="left:179px;top:284px" width="16" height="13"><svg viewBox="0 0 16 13" width="100%" height="100%" style="position:absolute;left:0;top:0">
<path d="M1.5 0H5.6L7.6 2H14.5A1.5 1.5 0 0 1 16 3.5V6H0V1.5A1.5 1.5 0 0 1 1.5 0Z" fill="#efa80a"/>
<path d="M0 4.5A1.5 1.5 0 0 1 1.5 3H6.6L8 3.6H14.5A1.5 1.5 0 0 1 16 5.1V11.5A1.5 1.5 0 0 1 14.5 13H1.5A1.5 1.5 0 0 1 0 11.5Z" fill="url(#fg)"/>
</svg></svg>
<div class="t" style="left:199.30px;top:284.00px;font-size:12px;line-height:16px;color:#ffffff;letter-spacing:-0.092px">Jin-Roh Wolf Brigade</div>
<div class="t" style="left:439.30px;top:284.00px;font-size:12px;line-height:16px;color:#dedede;letter-spacing:-0.317px">1/2/2026 9:29 PM</div>
<div class="t" style="left:583.50px;top:284.00px;font-size:12px;line-height:16px;color:#dedede;letter-spacing:-0.100px">File folder</div>
<svg style="left:179px;top:312px" width="16" height="13"><svg viewBox="0 0 16 13" width="100%" height="100%" style="position:absolute;left:0;top:0">
<path d="M1.5 0H5.6L7.6 2H14.5A1.5 1.5 0 0 1 16 3.5V6H0V1.5A1.5 1.5 0 0 1 1.5 0Z" fill="#efa80a"/>
<path d="M0 4.5A1.5 1.5 0 0 1 1.5 3H6.6L8 3.6H14.5A1.5 1.5 0 0 1 16 5.1V11.5A1.5 1.5 0 0 1 14.5 13H1.5A1.5 1.5 0 0 1 0 11.5Z" fill="url(#fg)"/>
</svg></svg>
<div class="t" style="left:199.30px;top:312.00px;font-size:12px;line-height:16px;color:#ffffff;letter-spacing:-2.300px">JJK</div>
<div class="t" style="left:439.30px;top:312.00px;font-size:12px;line-height:16px;color:#dedede;letter-spacing:-0.338px">1/25/2026 5:21 PM</div>
<div class="t" style="left:583.50px;top:312.00px;font-size:12px;line-height:16px;color:#dedede;letter-spacing:-0.100px">File folder</div>
<svg style="left:179px;top:340px" width="16" height="13"><svg viewBox="0 0 16 13" width="100%" height="100%" style="position:absolute;left:0;top:0">
<path d="M1.5 0H5.6L7.6 2H14.5A1.5 1.5 0 0 1 16 3.5V6H0V1.5A1.5 1.5 0 0 1 1.5 0Z" fill="#efa80a"/>
<path d="M0 4.5A1.5 1.5 0 0 1 1.5 3H6.6L8 3.6H14.5A1.5 1.5 0 0 1 16 5.1V11.5A1.5 1.5 0 0 1 14.5 13H1.5A1.5 1.5 0 0 1 0 11.5Z" fill="url(#fg)"/>
</svg></svg>
<div class="t" style="left:199.30px;top:340.00px;font-size:12px;line-height:16px;color:#ffffff;letter-spacing:-0.200px">Outlaw Star</div>
<div class="t" style="left:439.30px;top:340.00px;font-size:12px;line-height:16px;color:#dedede;letter-spacing:-0.217px">2/8/2026 9:11 PM</div>
<div class="t" style="left:583.50px;top:340.00px;font-size:12px;line-height:16px;color:#dedede;letter-spacing:-0.100px">File folder</div>
<svg style="left:179px;top:368px" width="16" height="13"><svg viewBox="0 0 16 13" width="100%" height="100%" style="position:absolute;left:0;top:0">
<path d="M1.5 0H5.6L7.6 2H14.5A1.5 1.5 0 0 1 16 3.5V6H0V1.5A1.5 1.5 0 0 1 1.5 0Z" fill="#efa80a"/>
<path d="M0 4.5A1.5 1.5 0 0 1 1.5 3H6.6L8 3.6H14.5A1.5 1.5 0 0 1 16 5.1V11.5A1.5 1.5 0 0 1 14.5 13H1.5A1.5 1.5 0 0 1 0 11.5Z" fill="url(#fg)"/>
</svg></svg>
<div class="t" style="left:199.30px;top:368.00px;font-size:12px;line-height:16px;color:#ffffff;letter-spacing:-0.078px">WitchBlade</div>
<div class="t" style="left:439.30px;top:368.00px;font-size:12px;line-height:16px;color:#dedede;letter-spacing:-0.317px">1/2/2026 9:46 PM</div>
<div class="t" style="left:583.50px;top:368.00px;font-size:12px;line-height:16px;color:#dedede;letter-spacing:-0.100px">File folder</div>
<div class="t" style="left:14.90px;top:702.80px;font-size:12px;line-height:16px;color:#dedede;letter-spacing:-0.150px">8 items</div>
<div class="abs" style="left:62.5px;top:706px;width:1px;height:11px;background:#cfcfcf"></div>
<div class="abs" style="left:1039px;top:699px;width:24px;height:25px;background:#4d4d4d;border:1px solid #5c5c5c"></div>
<svg style="left:1044px;top:704px" width="16" height="16"><rect x="0" y="0" width="16" height="16" rx="1.8" fill="#d2d2d2"/><path d="M2.3 3.4H13.7M2.3 6.4H13.7M2.3 9.4H13.7M2.3 12.4H13.7" stroke="#000" stroke-width="1"/></svg>
<svg style="left:1067px;top:703px" width="16" height="16"><rect x="0" y="0" width="16" height="16" rx="1.8" fill="#d2d2d2"/><rect x="2.3" y="2.3" width="11.4" height="8.6" rx="0.8" fill="#fff" stroke="#000" stroke-width="1.3"/><path d="M2.3 13.4H13.7" stroke="#000" stroke-width="1"/></svg>
<div class="bord"></div>
</div>
</body></html>
